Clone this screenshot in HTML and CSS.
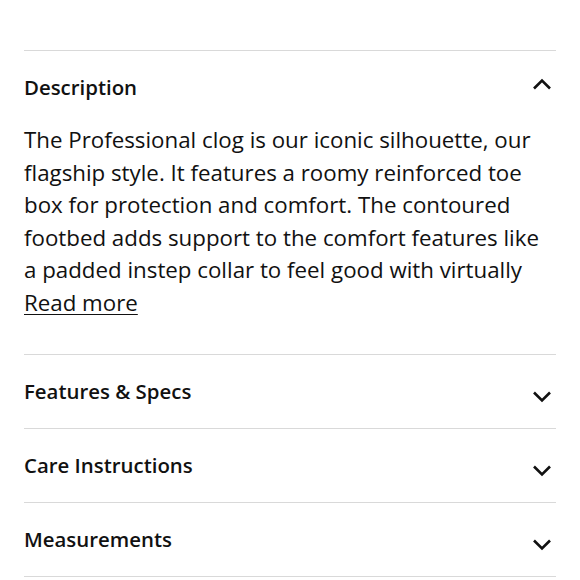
FILE: index.html
```html
<!DOCTYPE html>
<html lang="en">
<head>
<meta charset="utf-8">
<title>Product details</title>
<link rel="stylesheet" href="styles.css">
</head>
<body>
<div class="accordion">
  <section class="item open">
    <div class="head">
      <span class="title">Description</span>
      <svg class="chev" width="20" height="12" viewBox="0 0 20 12"><path d="M2 10.5 L10 2.5 L18 10.5" fill="none" stroke="#111" stroke-width="2.6"/></svg>
    </div>
    <div class="body">
      <p>The Professional clog is our iconic silhouette, our flagship style. It features a roomy reinforced toe box for protection and comfort. The contoured footbed adds support to the comfort features like a padded instep collar to feel good with virtually</p>
      <a class="more" href="#">Read more</a>
    </div>
  </section>
  <section class="item">
    <div class="head">
      <span class="title">Features &amp; Specs</span>
      <svg class="chev down" width="20" height="12" viewBox="0 0 20 12"><path d="M2 1.5 L10 9.5 L18 1.5" fill="none" stroke="#111" stroke-width="2.6"/></svg>
    </div>
  </section>
  <section class="item">
    <div class="head">
      <span class="title">Care Instructions</span>
      <svg class="chev down" width="20" height="12" viewBox="0 0 20 12"><path d="M2 1.5 L10 9.5 L18 1.5" fill="none" stroke="#111" stroke-width="2.6"/></svg>
    </div>
  </section>
  <section class="item">
    <div class="head">
      <span class="title">Measurements</span>
      <svg class="chev down" width="20" height="12" viewBox="0 0 20 12"><path d="M2 1.5 L10 9.5 L18 1.5" fill="none" stroke="#111" stroke-width="2.6"/></svg>
    </div>
  </section>
</div>
</body>
</html>
```
FILE: styles.css
```css
html, body {
  margin: 0;
  padding: 0;
  background: #fff;
}
body {
  font-family: "Open Sans", "Liberation Sans", sans-serif;
  color: #111;
}
.accordion {
  margin: 50px 24px 0;
  border-top: 1px solid #d9d9d9;
}
.item {
  border-bottom: 1px solid #d9d9d9;
}
.head {
  height: 73px;
  padding-bottom: 2px;
  box-sizing: border-box;
  display: flex;
  align-items: center;
  justify-content: space-between;
}
.title {
  font-size: 20.4px;
  font-weight: 600;
}
.chev {
  margin-right: 4px;
  margin-top: -5px;
}
.chev.down {
  margin-top: 12px;
}
.body {
  padding: 0 0 34.5px;
  font-size: 22.3px;
  line-height: 32.6px;
}
.body p {
  margin: 0;
}
.more {
  color: #111;
  text-decoration: underline;
  text-underline-offset: 3px;
  text-decoration-thickness: 1px;
}
```
